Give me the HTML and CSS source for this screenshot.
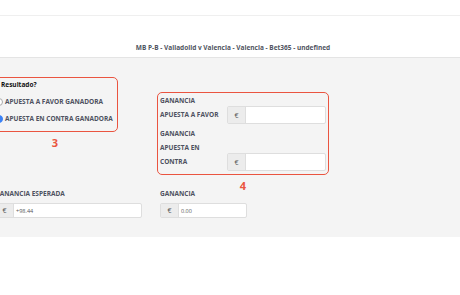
FILE: index.html
```html
<!DOCTYPE html>
<html lang="en">
<head>
<meta charset="UTF-8">
<meta name="viewport" content="width=device-width, initial-scale=1.0">
<title>Calculadora</title>
<link rel="stylesheet" href="styles.css">
</head>
<body>

<div class="topbar"></div>
<div class="header">
  <h2 class="title">MB P-B - Valladolid v Valencia - Valencia - Bet365 - undefined</h2>
</div>

<div class="panel">
  <div class="main">
    <div class="col">
      <div class="box box-result">
        <div class="question">Resultado?</div>
        <label class="radio-row"><span class="radio"></span>APUESTA A FAVOR GANADORA</label>
        <label class="radio-row"><span class="radio checked"></span>APUESTA EN CONTRA GANADORA</label>
      </div>
      <div class="mark">3</div>
    </div>

    <div class="col col-right">
      <div class="box box-profit">
        <div class="form-row">
          <div class="label">GANANCIA<br>APUESTA A FAVOR</div>
          <div class="input-group"><span class="addon">€</span><span class="field"></span></div>
        </div>
        <div class="form-row">
          <div class="label">GANANCIA<br>APUESTA EN<br>CONTRA</div>
          <div class="input-group"><span class="addon">€</span><span class="field"></span></div>
        </div>
      </div>
      <div class="mark">4</div>
    </div>

    <div class="col">
      <div class="label">GANANCIA ESPERADA</div>
      <div class="input-group small wide"><span class="addon">€</span><span class="field">+98.44</span></div>
    </div>

    <div class="col col-bottom">
      <div class="label">GANANCIA</div>
      <div class="input-group small narrow"><span class="addon">€</span><span class="field">0.00</span></div>
    </div>
  </div>
</div>

</body>
</html>
```

FILE: styles.css
```css
body {
  font-family: "Open Sans", Arial, sans-serif;
  background-color: #fff;
  margin: 0;
  padding: 0;
}
.topbar {
  height: 15px;
  border-bottom: 1px solid #efefef;
}
.header {
  height: 41px;
  border-bottom: 1px solid #e4e4e4;
  display: flex;
  align-items: flex-end;
  justify-content: center;
  padding-left: 6px;
}
.title {
  margin: 0 0 5px;
  font-size: 6.5px;
  font-weight: 700;
  color: #4f5461;
}
.panel {
  background-color: #f4f4f4;
  padding: 19px 0 19px;
}
.main {
  display: grid;
  grid-template-columns: 147px 172px;
  column-gap: 15px;
  margin-left: -5px;
}
.col-right {
  padding-top: 15px;
}
.box {
  border: 1.5px solid #ea5440;
  border-radius: 5px;
}
.box-result {
  width: 123px;
  box-sizing: border-box;
  padding: 2px 0 7px 5px;
}
.question {
  font-size: 6.5px;
  font-weight: 700;
  color: #111;
  line-height: 10px;
}
.radio-row {
  display: flex;
  align-items: center;
  gap: 2px;
  margin-top: 6px;
  font-size: 6.5px;
  font-weight: 700;
  color: #4d5160;
  line-height: 11px;
}
.radio {
  width: 6px;
  height: 6px;
  border: 0.5px solid #aaa;
  border-radius: 50%;
  background-color: #fff;
  margin-left: -6px;
}
.radio.checked {
  background-color: #3b82f6;
  border-color: #3b82f6;
}
.mark {
  color: #ea5440;
  font-size: 11px;
  font-weight: 700;
  text-align: center;
  line-height: 14px;
  margin-top: 4px;
}
.box-result + .mark {
  width: 120px;
}
.col-right .mark {
  margin-bottom: -5px;
}
.box-profit {
  padding: 0 2px 3px 2px;
}
.form-row {
  display: flex;
  align-items: flex-end;
  margin-top: 1px;
}
.form-row + .form-row {
  margin-top: 3px;
}
.form-row .label {
  width: 67px;
  padding-bottom: 2px;
  line-height: 14px;
}
.label {
  font-size: 6.5px;
  font-weight: 700;
  color: #4d5160;
  line-height: 12px;
}
.input-group {
  display: flex;
  height: 18px;
  width: 99px;
  border: 1px solid #dedede;
  border-radius: 2px;
  box-sizing: border-box;
  background-color: #fff;
}
.addon {
  width: 17px;
  background-color: #ececec;
  border-right: 1px solid #dedede;
  color: #555;
  font-size: 7px;
  display: flex;
  align-items: center;
  justify-content: center;
}
.field {
  flex: 1;
  font-size: 5.5px;
  color: #555;
  display: flex;
  align-items: center;
  padding-left: 2px;
}
.col-bottom {
  padding-left: 3px;
}
.input-group.small {
  height: 15px;
  margin-top: 3px;
}
.input-group.wide {
  width: 147px;
}
.input-group.narrow {
  width: 87px;
}
```
